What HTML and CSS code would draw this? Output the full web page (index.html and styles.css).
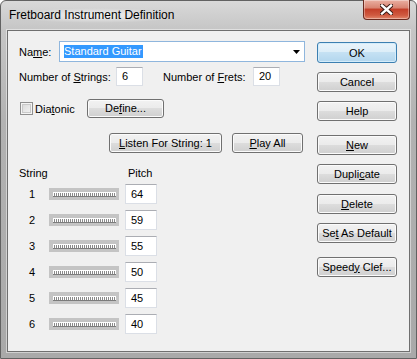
FILE: index.html
```html
<!DOCTYPE html>
<html lang="en">
<head>
    <meta charset="UTF-8">
    <title>Fretboard Instrument Definition</title>
    <link rel="stylesheet" href="styles.css">
</head>
<body>
<div class="window">
    <div class="titlebar">
        <span class="title">Fretboard Instrument Definition</span>
        <div class="close">
            <svg width="13" height="11" viewBox="0 0 13 11">
                <path d="M2 1.5 L11 9.5 M11 1.5 L2 9.5" stroke="#3a1a14" stroke-width="4.4" stroke-linecap="square"/>
                <path d="M2 1.5 L11 9.5 M11 1.5 L2 9.5" stroke="#fff" stroke-width="2.4" stroke-linecap="square"/>
            </svg>
        </div>
    </div>
    <div class="client">
        <div class="main">
            <div class="row name-row">
                <span class="lbl name-lbl">Na<u>m</u>e:</span>
                <div class="combo">
                    <span class="sel">Standard Guitar</span>
                    <svg class="arrow" width="7" height="4" viewBox="0 0 7 4"><polygon points="0,0 7,0 3.5,4" fill="#000"/></svg>
                </div>
            </div>
            <div class="row counts-row">
                <span class="lbl strings-lbl">Number of <u>S</u>trings:</span>
                <div class="field small">6</div>
                <span class="lbl frets-lbl">Number of <u>F</u>rets:</span>
                <div class="field small">20</div>
            </div>
            <div class="row diatonic-row">
                <span class="check"></span>
                <span class="lbl dia-lbl">Dia<u>t</u>onic</span>
                <button class="btn define">De<u>f</u>ine...</button>
            </div>
            <div class="row listen-row">
                <button class="btn listen"><u>L</u>isten For String: 1</button>
                <button class="btn playall"><u>P</u>lay All</button>
            </div>
            <div class="strings-head">
                <span>String</span>
                <span>Pitch</span>
            </div>
            <div class="string-list">
                <div class="string-row"><span class="num">1</span><div class="slider"><div class="ticks"></div></div><div class="field pitch">64</div></div>
                <div class="string-row"><span class="num">2</span><div class="slider"><div class="ticks"></div></div><div class="field pitch">59</div></div>
                <div class="string-row"><span class="num">3</span><div class="slider"><div class="ticks"></div></div><div class="field pitch">55</div></div>
                <div class="string-row"><span class="num">4</span><div class="slider"><div class="ticks"></div></div><div class="field pitch">50</div></div>
                <div class="string-row"><span class="num">5</span><div class="slider"><div class="ticks"></div></div><div class="field pitch">45</div></div>
                <div class="string-row"><span class="num">6</span><div class="slider"><div class="ticks"></div></div><div class="field pitch">40</div></div>
            </div>
        </div>
        <div class="side">
            <button class="btn side-btn default">OK</button>
            <button class="btn side-btn gap9">Cancel</button>
            <button class="btn side-btn gap9">Help</button>
            <button class="btn side-btn gap14"><u>N</u>ew</button>
            <button class="btn side-btn gap9">Dupli<u>c</u>ate</button>
            <button class="btn side-btn gap10"><u>D</u>elete</button>
            <button class="btn side-btn gap9">Se<u>t</u> As Default</button>
            <button class="btn side-btn gap14">Speed<u>y</u> Clef...</button>
        </div>
    </div>
</div>
</body>
</html>
```

FILE: styles.css
```css
* {
    box-sizing: border-box;
}
body {
    margin: 0;
    width: 417px;
    height: 359px;
    overflow: hidden;
    background: #fff;
    font: 11px "Liberation Sans", Arial, sans-serif;
    color: #000;
}
u {
    text-decoration: underline;
    text-underline-offset: 1px;
}

/* window frame */
.window {
    width: 417px;
    height: 359px;
    border: 1px solid #626262;
    border-radius: 6px 6px 0 0;
    background: linear-gradient(to bottom, #d9d9d9 0, #c6c6c6 28px, #b2b2b2 120px, #a9a9a9 100%);
}
.titlebar {
    height: 29px;
    display: flex;
    justify-content: space-between;
    align-items: flex-start;
    padding: 0 6px 0 8px;
}
.title {
    margin-top: 7px;
    font-size: 12px;
    line-height: 15px;
    padding: 0 10px 0 0;
    background: radial-gradient(ellipse at center, rgba(255,255,255,.75) 0, rgba(255,255,255,0) 70%);
}
.close {
    width: 47px;
    height: 20px;
    margin-top: -1px;
    border: 1px solid #6b2a1f;
    border-top: none;
    border-radius: 0 0 4px 4px;
    background: linear-gradient(to bottom, #eab0a2 0, #d98573 40%, #c4402a 50%, #d05a40 80%, #e2876c 100%);
    box-shadow: inset 0 0 0 1px rgba(255,255,255,.35);
    display: flex;
    align-items: center;
    justify-content: center;
}

/* client area */
.client {
    width: 403px;
    height: 322px;
    margin-left: 6px;
    border: 1px solid #6f6f6f;
    box-shadow: 0 0 0 1px rgba(255,255,255,.45);
    background: #f0f0f0;
    display: flex;
    padding: 0 12px 0 11px;
    gap: 12px;
}
.main {
    width: 286px;
    padding-top: 10px;
}
.row {
    display: flex;
    align-items: center;
}
.lbl {
    line-height: 14px;
}

.name-row {
    height: 21px;
}
.name-lbl {
    width: 40px;
}
.combo {
    width: 246px;
    height: 21px;
    border: 1px solid #8fb6dd;
    background: #fff;
    display: flex;
    align-items: center;
    justify-content: space-between;
    padding: 0 4px 0 4px;
}
.sel {
    background: #3399ff;
    color: #fff;
    line-height: 13px;
    padding: 0 1px 0 0;
}

.field {
    height: 19px;
    border: 1px solid #dbdfe6;
    border-top-color: #abadb3;
    background: #fff;
    line-height: 17px;
    padding-left: 5px;
}
.counts-row {
    margin-top: 5px;
    height: 19px;
}
.strings-lbl {
    width: 97px;
}
.small {
    width: 27px;
}
.frets-lbl {
    width: 90px;
    margin-left: 20px;
}

.diatonic-row {
    margin-top: 13px;
    height: 19px;
}
.check {
    width: 13px;
    height: 13px;
    margin-left: 1px;
    border: 1px solid #8f8f8f;
    background: linear-gradient(135deg, #d6d6d6 0, #f6f6f6 100%);
    box-shadow: inset 0 0 0 1px #f4f4f4, inset 0 0 0 2px #c9c9c9;
}
.dia-lbl {
    margin-left: 2px;
    width: 52px;
}

/* push buttons */
.btn {
    font: 11px "Liberation Sans", Arial, sans-serif;
    color: #000;
    height: 20px;
    padding: 0;
    border: 1px solid #707070;
    border-radius: 3px;
    background: linear-gradient(to bottom, #f2f2f2 0, #ebebeb 50%, #dddddd 50%, #cfcfcf 100%);
    box-shadow: inset 0 0 0 1px #fbfbfb;
    line-height: 17px;
    text-align: center;
}
.define {
    width: 77px;
    height: 19px;
}
.listen-row {
    margin-top: 15px;
    height: 20px;
}
.listen {
    width: 113px;
    margin-left: 90px;
}
.playall {
    width: 71px;
    margin-left: 10px;
}

/* strings table */
.strings-head {
    margin-top: 13px;
    display: flex;
    line-height: 14px;
}
.strings-head span:first-child {
    width: 109px;
}
.string-list {
    margin-top: 4px;
    display: flex;
    flex-direction: column;
    gap: 6px;
}
.string-row {
    display: grid;
    grid-template-columns: 30px 76px 32px;
    align-items: center;
    height: 20px;
}
.num {
    padding-left: 10px;
}
.slider {
    width: 70px;
    height: 12px;
    background: #c4c4c4;
    display: flex;
    align-items: center;
    justify-content: center;
}
.ticks {
    width: 63px;
    height: 5px;
    border-top: 1px solid #ffffff;
    border-bottom: 1px solid #7c7c7c;
    background: repeating-linear-gradient(to right, #ffffff 0, #ffffff 1px, #8a8a8a 1px, #8a8a8a 2px);
}
.pitch {
    height: 20px;
    line-height: 18px;
}

/* right-hand buttons */
.side {
    width: 80px;
    padding-top: 11px;
    display: flex;
    flex-direction: column;
}
.side-btn {
    width: 80px;
}
.default {
    height: 21px;
    border-color: #3c7fb1;
    background: linear-gradient(to bottom, #e9f4fb 0, #dcedf8 50%, #c5e1f3 50%, #b2d6ee 100%);
    box-shadow: inset 0 0 0 1px #d4ecfa;
    line-height: 18px;
}
.gap9 {
    margin-top: 9px;
}
.gap10 {
    margin-top: 10px;
}
.gap14 {
    margin-top: 14px;
}
```
